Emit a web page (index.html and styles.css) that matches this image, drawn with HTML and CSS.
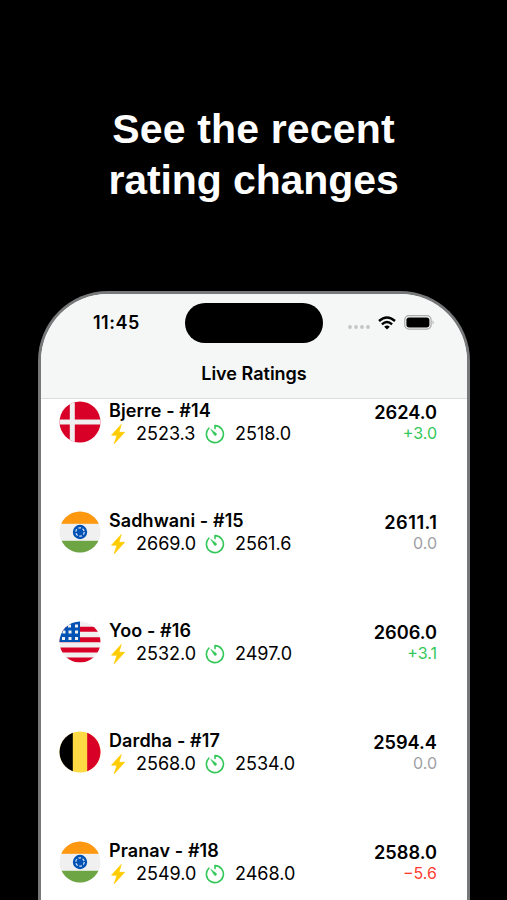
FILE: index.html
```html
<!DOCTYPE html>
<html lang="en">
<head>
  <meta charset="UTF-8"/>
  <title>Live Ratings</title>
  <link rel="stylesheet" href="styles.css">
</head>
<body>

  <!-- SHARED ICONS AND FLAGS -->
  <svg class="defs" width="0" height="0">
    <defs>
      <clipPath id="round"><circle cx="21" cy="21" r="20.5"/></clipPath>
      <symbol id="bolt" viewBox="0 0 14 20">
        <path d="M10.2 0.5 L0.5 11.2 H6 L3.2 19.8 L13.6 8.3 H8 Z" fill="#fc0" stroke="#fc0" stroke-width=".7" stroke-linejoin="round"/>
      </symbol>
      <symbol id="timer" viewBox="0 0 20 20">
        <path d="M10 4.6 V1.6 A8.5 8.5 0 1 1 3.8 4.2" fill="none" stroke="#34c759" stroke-width="1.6" stroke-linecap="round" stroke-linejoin="round"/>
        <path d="M5.7 5.2 L11.2 9.3 A1.3 1.3 0 0 1 9.3 11.1 Z" fill="#34c759" stroke="#34c759" stroke-width=".5" stroke-linejoin="round"/>
      </symbol>
      <symbol id="denmark" viewBox="0 0 42 42">
        <g clip-path="url(#round)">
          <rect width="42" height="42" fill="#d80027"/>
          <path d="M13.3 0 V42 M0 21 H42" stroke="#f0f0f0" stroke-width="5"/>
        </g>
      </symbol>
      <symbol id="india" viewBox="0 0 42 42">
        <g clip-path="url(#round)">
          <rect width="42" height="42" fill="#f0f0f0"/>
          <rect width="42" height="12.8" fill="#ff9811"/>
          <rect y="29.8" width="42" height="13" fill="#6da544"/>
          <circle cx="21" cy="21" r="7.2" fill="#0052b4"/>
          <circle cx="21" cy="21" r="4.2" fill="none" stroke="#d5e3f2" stroke-width="1.2" stroke-dasharray="2.8 1.6"/>
        </g>
      </symbol>
      <symbol id="usa" viewBox="0 0 42 42">
        <g clip-path="url(#round)">
          <rect width="42" height="42" fill="#f0f0f0"/>
          <path d="M0 8.3 H42 M0 18.7 H42 M0 29 H42 M0 39 H42" stroke="#d80027" stroke-width="5"/>
          <rect width="21" height="21" fill="#0052b4"/>
          <path d="M9 5 h3 M16 5 h3 M3.5 11 h3 M9.5 11 h3 M16 11 h3 M3 17.5 h3 M9.5 17.5 h3 M16 17.5 h3" stroke="#f0f0f0" stroke-width="3"/>
        </g>
      </symbol>
      <symbol id="belgium" viewBox="0 0 42 42">
        <g clip-path="url(#round)">
          <rect width="42" height="42" fill="#ffda44"/>
          <rect width="13.8" height="42" fill="#000"/>
          <rect x="28.2" width="14" height="42" fill="#d80027"/>
        </g>
      </symbol>
    </defs>
  </svg>

  <h1 class="headline">See the recent<br><span class="tight">rating changes</span></h1>

  <!-- PHONE -->
  <div class="phone">
    <div class="top">
      <div class="status">
        <span class="time">11:45</span>
        <div class="island"></div>
        <div class="status-icons">
          <svg width="22" height="4" viewBox="0 0 22 4" class="signal" fill="#c4c5c5">
            <circle cx="2" cy="2" r="1.9"/><circle cx="8" cy="2" r="1.9"/><circle cx="14" cy="2" r="1.9"/><circle cx="20" cy="2" r="1.9"/>
          </svg>
          <svg width="18" height="14" viewBox="0 0 18 14" class="wifi">
            <path d="M1 5 Q9 -2.2 17 5 M3.9 8.3 Q9 3.7 14.1 8.3" fill="none" stroke="#000" stroke-width="2.4"/>
            <path d="M9 13.5 L6.2 10.8 Q9 8.4 11.8 10.8 Z" fill="#000"/>
          </svg>
          <svg width="31" height="15" viewBox="0 0 31 15" class="battery">
            <rect x=".7" y=".7" width="26.4" height="13.4" rx="4.2" fill="none" stroke="#a9aaaa" stroke-width="1.2"/>
            <rect x="2.4" y="2.4" width="23" height="10" rx="2.7" fill="#000"/>
            <path d="M28.6 5.2 Q30.8 7.4 28.6 9.6 Z" fill="#a9aaaa"/>
          </svg>
        </div>
      </div>
      <h2 class="title">Live Ratings</h2>
    </div>

    <!-- PLAYERS -->
    <ul class="players">
      <li class="player">
        <svg class="flag"><use href="#denmark"/></svg>
        <div class="info">
          <div class="name">Bjerre - #14</div>
          <div class="other"><svg class="bolt"><use href="#bolt"/></svg><span class="rapid">2523.3</span><svg class="timer"><use href="#timer"/></svg><span>2518.0</span></div>
        </div>
        <div class="rating"><div class="live">2624.0</div><div class="change up">+3.0</div></div>
      </li>
      <li class="player">
        <svg class="flag"><use href="#india"/></svg>
        <div class="info">
          <div class="name">Sadhwani - #15</div>
          <div class="other"><svg class="bolt"><use href="#bolt"/></svg><span class="rapid">2669.0</span><svg class="timer"><use href="#timer"/></svg><span>2561.6</span></div>
        </div>
        <div class="rating"><div class="live ones">2611.1</div><div class="change">0.0</div></div>
      </li>
      <li class="player">
        <svg class="flag"><use href="#usa"/></svg>
        <div class="info">
          <div class="name">Yoo - #16</div>
          <div class="other"><svg class="bolt"><use href="#bolt"/></svg><span class="rapid">2532.0</span><svg class="timer"><use href="#timer"/></svg><span>2497.0</span></div>
        </div>
        <div class="rating"><div class="live">2606.0</div><div class="change up">+3.1</div></div>
      </li>
      <li class="player">
        <svg class="flag"><use href="#belgium"/></svg>
        <div class="info">
          <div class="name">Dardha - #17</div>
          <div class="other"><svg class="bolt"><use href="#bolt"/></svg><span class="rapid">2568.0</span><svg class="timer"><use href="#timer"/></svg><span>2534.0</span></div>
        </div>
        <div class="rating"><div class="live">2594.4</div><div class="change">0.0</div></div>
      </li>
      <li class="player">
        <svg class="flag"><use href="#india"/></svg>
        <div class="info">
          <div class="name">Pranav - #18</div>
          <div class="other"><svg class="bolt"><use href="#bolt"/></svg><span class="rapid">2549.0</span><svg class="timer"><use href="#timer"/></svg><span>2468.0</span></div>
        </div>
        <div class="rating"><div class="live">2588.0</div><div class="change down">−5.6</div></div>
      </li>
    </ul>
  </div>
</body>
</html>
```
FILE: styles.css
```css
/* GLOBAL STYLES */
* {
  margin: 0;
  padding: 0;
  box-sizing: border-box;
}
body {
  height: 900px;
  overflow: hidden;
  background: #000;
  color: #000;
  font-family: Inter, "Liberation Sans", sans-serif;
}
svg {
  display: block;
  flex: none;
}
.defs {
  position: absolute;
}
/* HEADLINE */
.headline {
  height: 291px;
  padding-top: 104px;
  color: #fff;
  font-family: "Liberation Sans", Arial, sans-serif;
  font-size: 41px;
  line-height: 51px;
  letter-spacing: 0.15px;
  text-align: center;
}
.tight {
  letter-spacing: -0.1px;
}
/* PHONE */
.phone {
  width: 432px;
  height: 609px;
  margin-left: 38px;
  border: 3px solid #77787a;
  border-bottom: 0;
  border-radius: 70px 70px 0 0;
  background: #fff;
  overflow: hidden;
}
.top {
  height: 105px;
  background: #f5f6f6;
  border-bottom: 1px solid #dcdddd;
}
/* STATUS BAR */
.status {
  display: flex;
  height: 58px;
  padding-top: 9px;
}
.time {
  width: 144px;
  padding-left: 52px;
  font-size: 18px;
  font-weight: 600;
  line-height: 39px;
  letter-spacing: 0.5px;
}
.island {
  width: 138px;
  height: 40px;
  border-radius: 20px;
  background: #000;
}
.status-icons {
  display: flex;
  align-items: center;
  height: 39px;
  margin-left: 25px;
}
.signal {
  margin-top: 9px;
}
.wifi {
  margin-left: 8px;
  margin-right: 8px;
}
/* TITLE */
.title {
  font-size: 18px;
  font-weight: 600;
  line-height: 44px;
  text-align: center;
}
/* PLAYER LIST */
.players {
  list-style: none;
}
.player {
  display: flex;
  height: 110px;
  padding: 1px 30px 0 18px;
}
.flag {
  width: 42px;
  height: 42px;
  margin-top: 1px;
}
.info {
  flex: 1;
  margin-left: 8px;
}
.name {
  font-size: 18px;
  font-weight: 600;
  line-height: 22px;
  letter-spacing: 0.1px;
}
.other {
  display: flex;
  align-items: center;
  height: 23px;
  font-size: 18px;
}
.bolt {
  width: 14px;
  height: 20px;
  margin-left: 2px;
  margin-right: 11px;
}
.rapid {
  width: 69px;
}
.timer {
  width: 20px;
  height: 20px;
  margin-right: 10px;
}
.rating {
  padding-top: 1px;
  text-align: right;
}
.live {
  font-size: 18.2px;
  font-weight: 600;
  line-height: 22px;
}
.ones {
  letter-spacing: 0.5px;
  margin-right: -0.5px;
}
.change {
  color: #a0a0a4;
  font-size: 16px;
  line-height: 21px;
}
.up {
  color: #34c759;
}
.down {
  color: #ff3b30;
}
```
